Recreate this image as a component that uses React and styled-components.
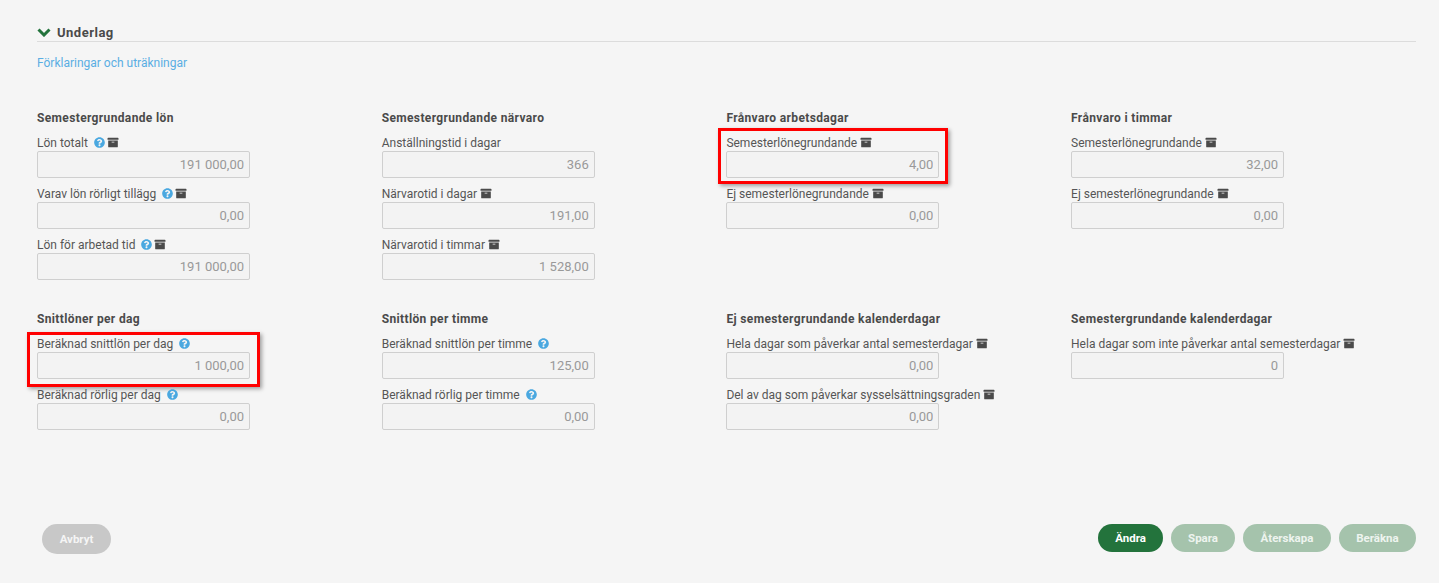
import React from "react";
import styled, { createGlobalStyle } from "styled-components";
import { FaArchive, FaQuestionCircle } from "react-icons/fa";

const groups = [
  [
    {
      title: "Semestergrundande lön",
      fields: [
        { label: "Lön totalt", value: "191 000,00", help: true, archive: true },
        { label: "Varav lön rörligt tillägg", value: "0,00", help: true, archive: true },
        { label: "Lön för arbetad tid", value: "191 000,00", help: true, archive: true },
      ],
    },
    {
      title: "Semestergrundande närvaro",
      fields: [
        { label: "Anställningstid i dagar", value: "366" },
        { label: "Närvarotid i dagar", value: "191,00", archive: true },
        { label: "Närvarotid i timmar", value: "1 528,00", archive: true },
      ],
    },
    {
      title: "Frånvaro arbetsdagar",
      fields: [
        { label: "Semesterlönegrundande", value: "4,00", archive: true, marked: "-6px -9px -6px -8px" },
        { label: "Ej semesterlönegrundande", value: "0,00", archive: true },
      ],
    },
    {
      title: "Frånvaro i timmar",
      fields: [
        { label: "Semesterlönegrundande", value: "32,00", archive: true },
        { label: "Ej semesterlönegrundande", value: "0,00", archive: true },
      ],
    },
  ],
  [
    {
      title: "Snittlöner per dag",
      fields: [
        { label: "Beräknad snittlön per dag", value: "1 000,00", help: true, marked: "-3px -10px -8px -10px" },
        { label: "Beräknad rörlig per dag", value: "0,00", help: true },
      ],
    },
    {
      title: "Snittlön per timme",
      fields: [
        { label: "Beräknad snittlön per timme", value: "125,00", help: true },
        { label: "Beräknad rörlig per timme", value: "0,00", help: true },
      ],
    },
    {
      title: "Ej semestergrundande kalenderdagar",
      fields: [
        { label: "Hela dagar som påverkar antal semesterdagar", value: "0,00", archive: true },
        { label: "Del av dag som påverkar sysselsättningsgraden", value: "0,00", archive: true },
      ],
    },
    {
      title: "Semestergrundande kalenderdagar",
      fields: [
        { label: "Hela dagar som inte påverkar antal semesterdagar", value: "0", archive: true },
      ],
    },
  ],
];

const App = () => {
  return (
    <Page>
      <GlobalStyle />
      <SectionHeader>
        <Chevron viewBox="0 0 14 9">
          <path d="M1.5 1.5 7 7l5.5-5.5" />
        </Chevron>
        <span>Underlag</span>
      </SectionHeader>
      <InfoLink href="#">Förklaringar och uträkningar</InfoLink>
      {groups.map((row, i) => (
        <GroupRow key={i} $first={i === 0}>
          {row.map((group) => (
            <Group key={group.title}>
              <GroupTitle>{group.title}</GroupTitle>
              {group.fields.map((field) => (
                <Field key={field.label} $marked={field.marked}>
                  <FieldLabel>
                    <span>{field.label}</span>
                    {field.help && <HelpIcon />}
                    {field.archive && <ArchiveIcon />}
                  </FieldLabel>
                  <ValueInput readOnly disabled value={field.value} />
                </Field>
              ))}
            </Group>
          ))}
        </GroupRow>
      ))}
      <Footer>
        <CancelButton>Avbryt</CancelButton>
        <Actions>
          <ActionButton $width={65}>Ändra</ActionButton>
          <ActionButton $width={64} disabled>Spara</ActionButton>
          <ActionButton $width={88} disabled>Återskapa</ActionButton>
          <ActionButton $width={77} disabled>Beräkna</ActionButton>
        </Actions>
      </Footer>
    </Page>
  );
};

const GlobalStyle = createGlobalStyle`
  html, body {
    margin: 0;
    background: #f5f5f5;
  }
`;

const Page = styled.div`
  box-sizing: border-box;
  height: 583px;
  overflow: hidden;
  padding: 24px 23px 0 37px;
  font-family: "Roboto", "Liberation Sans", sans-serif;
  color: #4a4a4a;
`;

const SectionHeader = styled.div`
  display: flex;
  align-items: center;
  gap: 6px;
  height: 17px;
  border-bottom: 1px solid #dcdcdc;
  font-size: 13px;
  font-weight: 700;
  letter-spacing: 0.5px;
`;

const Chevron = styled.svg`
  width: 14px;
  height: 9px;

  path {
    fill: none;
    stroke: #23733c;
    stroke-width: 3;
  }
`;

const InfoLink = styled.a`
  display: block;
  margin-top: 13px;
  font-size: 12px;
  line-height: 16px;
  color: #5aaee3;
  text-decoration: none;
`;

const GroupRow = styled.div`
  display: grid;
  grid-template-columns: repeat(4, 344.7px);
  height: 201px;
  margin-top: ${(p) => (p.$first ? "39px" : "0")};
`;

const Group = styled.div`
  display: flex;
  flex-direction: column;
`;

const GroupTitle = styled.h3`
  margin: 0 0 8px;
  font-size: 12px;
  line-height: 16px;
  font-weight: 700;
  letter-spacing: 0.36px;
  color: #4a4a4a;
`;

const Field = styled.div`
  position: relative;
  width: 213px;
  margin-bottom: 7px;

  ${(p) =>
    p.$marked &&
    `
    &::after {
      content: "";
      position: absolute;
      inset: ${p.$marked};
      border: 3px solid #ff0000;
      box-shadow: 2px 2px 4px rgba(0, 0, 0, 0.35);
      pointer-events: none;
    }
  `}
`;

const FieldLabel = styled.div`
  display: flex;
  align-items: center;
  gap: 3px;
  height: 17px;
  font-size: 12px;
  white-space: nowrap;
  color: #555;
`;

const HelpIcon = styled(FaQuestionCircle)`
  flex-shrink: 0;
  width: 11px;
  height: 11px;
  margin: 0 -1px 0 3px;
  color: #4aa8e0;
`;

const ArchiveIcon = styled(FaArchive)`
  flex-shrink: 0;
  width: 12px;
  height: 11px;
  color: #4a4a4a;
`;

const ValueInput = styled.input`
  display: block;
  box-sizing: border-box;
  width: 213px;
  height: 27px;
  padding: 0 5px;
  background: #f3f3f3;
  border: 1px solid #cfcfcf;
  border-radius: 2px;
  font: 13px "Roboto", "Liberation Sans", sans-serif;
  color: #999;
  text-align: right;
  opacity: 1;
`;

const Footer = styled.div`
  display: flex;
  justify-content: space-between;
  align-items: flex-start;
  margin-top: 12px;
  padding-left: 5px;
`;

const Actions = styled.div`
  display: flex;
  gap: 8px;
`;

const ActionButton = styled.button`
  width: ${(p) => p.$width}px;
  height: 28px;
  padding: 0 0 1px;
  border: 0;
  border-radius: 14px;
  background: ${(p) => (p.disabled ? "#a5c3ac" : "#23733c")};
  color: ${(p) => (p.disabled ? "#eef4ef" : "#fff")};
  font: 700 11.5px "Roboto", "Liberation Sans", sans-serif;
`;

const CancelButton = styled.button`
  width: 69px;
  height: 30px;
  padding: 0 0 1px;
  border: 0;
  border-radius: 15px;
  background: #c8c8c8;
  color: #f5f5f5;
  font: 700 11.5px "Roboto", "Liberation Sans", sans-serif;
`;

export default App;
